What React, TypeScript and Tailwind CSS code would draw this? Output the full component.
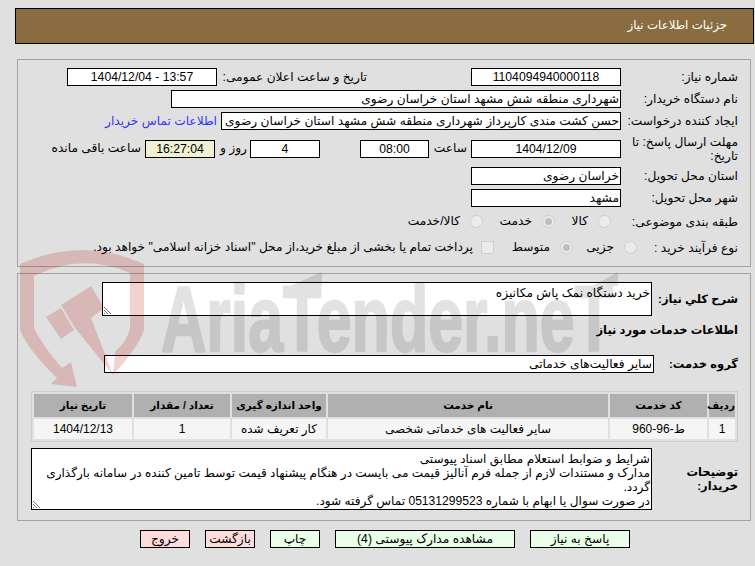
// App.tsx
const font = { fontFamily: '"Liberation Sans", "DejaVu Sans", sans-serif' };

function Field({ className, timer, children }: { className: string; timer?: boolean; children?: React.ReactNode }) {
  return (
    <div
      className={`h-[18px] shrink-0 border border-black ${timer ? "bg-[#f0f0d2]" : "bg-white"} text-[12.2px] leading-[16px] whitespace-nowrap overflow-hidden ${className}`}
    >
      {children}
    </div>
  );
}

function Label({ children }: { children: React.ReactNode }) {
  return <div className="w-[129px] shrink-0 pr-[12px] text-[12.2px] leading-[14px] text-black">{children}</div>;
}

function Radio({ checked, label, className }: { checked?: boolean; label: string; className: string }) {
  return (
    <div className={`flex items-center gap-[10px] ${className}`}>
      <span className="flex h-[13px] w-[13px] items-center justify-center rounded-full border border-[#cfcfcf] bg-[#ebebeb]">
        {checked && <span className="h-[7px] w-[7px] rounded-full bg-[#bfbfbf]" />}
      </span>
      <span>{label}</span>
    </div>
  );
}

function ResizeGrip() {
  return (
    <svg className="absolute bottom-0 left-0" width="9" height="9" viewBox="0 0 9 9" stroke="#777777">
      <path d="M1 1 L8 8 M1 4 L5 8 M1 7 L2 8" />
    </svg>
  );
}

// logo watermark sits over the whole page, semi transparent
function Watermark() {
  return (
    <svg className="pointer-events-none absolute left-0 top-0 z-20 [direction:ltr]" width="755" height="566" viewBox="0 0 755 566">
      <g fill="rgba(185,0,0,0.18)">
        <path d="M20 264 Q82 236 144 264 L144 330 Q138 348 113 375 L91 318 L104 308 L91 286 L61 305 L75 328 L113 375 L115 352 Q128 340 130 328 L130 273 Q82 252 34 276 L34 328 Q42 345 62 368 L71 362 L77 387 L51 384 L57 378 Q28 350 20 330 Z" />
        <path d="M46 317 L61 308 L74 330 L61 339 Z" />
      </g>
      <g opacity="0.11" fill="#000000" stroke="#000000" fontWeight="700" style={{ fontFamily: '"Liberation Sans", sans-serif' }}>
        <text x="161" y="351" fontSize="92" strokeWidth="2.5" strokeLinejoin="round" textLength="452" lengthAdjust="spacingAndGlyphs" direction="ltr" className="[direction:ltr]">
          AriaTender.neT
        </text>
        <path strokeWidth="0" d="M290 286 L322 272 L322 286 Z M592 286 L618 272 L618 286 Z" />
      </g>
    </svg>
  );
}

export default function App() {
  return (
    <div dir="rtl" style={font} className="relative h-[566px] w-[755px] overflow-hidden bg-[#e0e0e0] text-black">
      <Watermark />
      <div className="relative z-10 flex flex-col">
        {/* Header */}
        <div className="ml-[15px] mr-[1px] mt-[8px] flex h-[36px] items-center border border-black bg-[#8b6c41] pr-[26px] text-[11.8px] text-white">
          جزئیات اطلاعات نیاز
        </div>

        {/* Main info */}
        <div className="ml-[17px] mr-[4px] mt-[15px] flex h-[208px] flex-col border border-[#a3a3a3] pt-[8px]">
          <div className="flex items-center">
            <Label>شماره نیاز:</Label>
            <Field className="w-[150px] text-center">1104094940000118</Field>
            <div className="mr-[104px] w-[150px] whitespace-nowrap text-[12.2px]">تاریخ و ساعت اعلان عمومی:</div>
            <Field className="w-[150px] text-center">13:57 - 1404/12/04</Field>
          </div>
          <div className="mt-[4px] flex items-center">
            <Label>نام دستگاه خریدار:</Label>
            <Field className="w-[450px] pr-px">شهرداری منطقه شش مشهد استان خراسان رضوی</Field>
          </div>
          <div className="mt-[4px] flex items-center">
            <Label>ایجاد کننده درخواست:</Label>
            <Field className="w-[400px] pr-px">حسن کشت مندی کارپرداز شهرداری منطقه شش مشهد استان خراسان رضوی</Field>
            <a className="mr-[4px] whitespace-nowrap text-[12.2px] text-[#3333ff]">اطلاعات تماس خریدار</a>
          </div>
          <div className="mt-[4px] flex h-[28px] items-center">
            <Label>مهلت ارسال پاسخ: تا تاریخ:</Label>
            <div className="flex items-center whitespace-nowrap text-[12.2px]">
              <Field className="w-[150px] text-center">1404/12/09</Field>
              <div className="w-[42px] pr-[4px]">ساعت</div>
              <Field className="w-[69px] text-center">08:00</Field>
              <div className="w-[40px]" />
              <Field className="w-[70px] text-center">4</Field>
              <div className="w-[35px] pr-[3px]">روز و</div>
              <Field timer className="w-[70px] text-center">16:27:04</Field>
              <div className="pr-[4px]">ساعت باقی مانده</div>
            </div>
          </div>
          <div className="mt-[4px] flex items-center">
            <Label>استان محل تحویل:</Label>
            <Field className="w-[150px] pr-px">خراسان رضوی</Field>
          </div>
          <div className="mt-[4px] flex items-center">
            <Label>شهر محل تحویل:</Label>
            <Field className="w-[150px] pr-px">مشهد</Field>
          </div>
          <div className="mt-[5px] flex h-[20px] items-center whitespace-nowrap text-[12.2px]">
            <Label>طبقه بندی موضوعی:</Label>
            <Radio className="mr-[10px] w-[56px]" label="کالا" />
            <Radio className="w-[72px]" checked label="خدمت" />
            <Radio className="" label="کالا/خدمت" />
          </div>
          <div className="mt-[6px] flex h-[20px] items-center whitespace-nowrap text-[12.2px]">
            <Label>نوع فرآیند خرید :</Label>
            <Radio className="mr-[-16px] w-[64px]" label="جزیی" />
            <Radio className="w-[79px]" checked label="متوسط" />
            <div className="flex items-center gap-[8px]">
              <span className="h-[13px] w-[13px] border border-[#cfcfcf] bg-[#ebebeb]" />
              <span>پرداخت تمام یا بخشی از مبلغ خرید،از محل "اسناد خزانه اسلامی" خواهد بود.</span>
            </div>
          </div>
        </div>

        {/* Service info */}
        <div className="ml-[17px] mr-[4px] mt-[6px] flex h-[248px] flex-col border border-[#a3a3a3] pt-[8px]">
          <div className="flex items-center">
            <div className="w-[98px] shrink-0 whitespace-nowrap pr-[12px] pt-[2px] text-[11.5px] font-bold">شرح کلي نیاز:</div>
            <div className="relative h-[34px] w-[550px] border border-black bg-white pr-px pt-[2px] text-[12.2px] leading-[16px]">
              خرید دستگاه نمک پاش مکانیزه
              <ResizeGrip />
            </div>
          </div>
          <div className="mt-[6px] pr-[12px] text-[11.5px] font-bold leading-[16px]">اطلاعات خدمات مورد نیاز</div>
          <div className="mt-[16px] flex items-center">
            <div className="w-[96px] shrink-0 whitespace-nowrap pr-[12px] pt-[2px] text-[11.5px] font-bold">گروه خدمت:</div>
            <Field className="w-[550px] pr-px">سایر فعالیت‌های خدماتی</Field>
          </div>

          <table className="mr-[12px] mt-[18px] w-[707px] table-fixed border-separate border-spacing-[2px] border border-[#cccccc] text-center text-[12px]">
            <thead>
              <tr className="h-[23px] bg-[#b0b0b0] text-[10.5px]">
                <th className="w-[26px] font-bold">ردیف</th>
                <th className="w-[97px] font-bold">کد خدمت</th>
                <th className="w-[280px] font-bold">نام خدمت</th>
                <th className="w-[94px] font-bold">واحد اندازه گیری</th>
                <th className="w-[96px] font-bold">تعداد / مقدار</th>
                <th className="font-bold">تاریخ نیاز</th>
              </tr>
            </thead>
            <tbody>
              <tr className="h-[20px] bg-[#f5f5f5]">
                <td>1</td>
                <td>ط-96-960</td>
                <td>سایر فعالیت های خدماتی شخصی</td>
                <td>کار تعریف شده</td>
                <td>1</td>
                <td>1404/12/13</td>
              </tr>
            </tbody>
          </table>

          <div className="mt-[6px] flex items-center">
            <div className="w-[98px] shrink-0 pr-[12px] text-[11.5px] font-bold leading-[14px]">توضیحات خریدار:</div>
            <div className="relative h-[62px] w-[621px] border border-black bg-white pr-px pt-[3px] text-[12.1px] leading-[14px]">
              شرایط و ضوابط استعلام مطابق اسناد پیوستی
              <br />
              مدارک و مستندات لازم از جمله فرم آنالیز قیمت می بایست در هنگام پیشنهاد قیمت توسط تامین کننده در سامانه بارگذاری گردد.
              <br />
              در صورت سوال یا ابهام با شماره 05131299523 تماس گرفته شود.
              <ResizeGrip />
            </div>
          </div>
        </div>

        {/* Actions */}
        <div className="mr-[125px] mt-[9px] flex gap-[15px] text-[12.2px]">
          <button className="h-[18px] w-[100px] border border-black bg-[#eaffea] leading-[14px]">پاسخ به نیاز</button>
          <button className="h-[18px] w-[180px] border border-black bg-[#eaffea] leading-[14px]">مشاهده مدارک پیوستی (4)</button>
          <button className="h-[18px] w-[50px] border border-black bg-[#eaffea] leading-[14px]">چاپ</button>
          <button className="h-[18px] w-[50px] border border-black bg-[#ffdcdc] leading-[14px]">بازگشت</button>
          <button className="h-[18px] w-[50px] border border-black bg-[#ffdcdc] leading-[14px]">خروج</button>
        </div>
      </div>
    </div>
  );
}
